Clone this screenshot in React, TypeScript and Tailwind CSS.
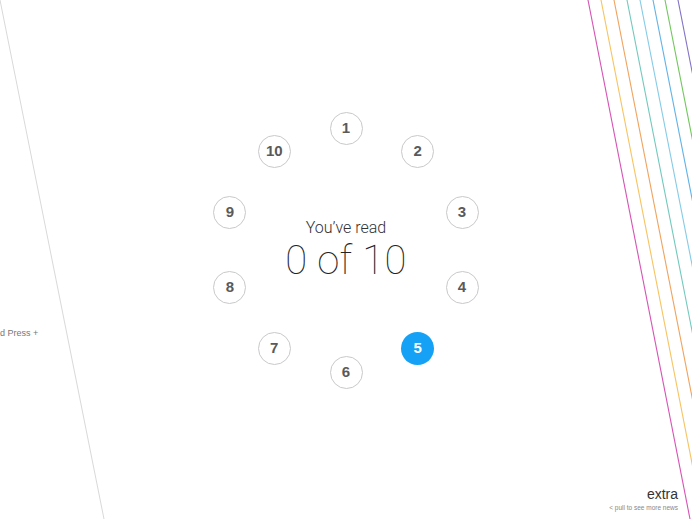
import React from "react";

const LINES = [
  { x: 588, color: "#d654b4" },
  { x: 601, color: "#f6c462" },
  { x: 614, color: "#f0a35e" },
  { x: 627, color: "#72c9bc" },
  { x: 640, color: "#86cbe6" },
  { x: 653, color: "#62b2e6" },
  { x: 665, color: "#72c75e" },
  { x: 678, color: "#8272c6" },
];

const RING = 122;
const CURRENT = 5;

function Stripes() {
  return (
    <svg
      aria-hidden
      className="pointer-events-none absolute inset-0"
      width="692"
      height="519"
      viewBox="0 0 692 519"
    >
      <line x1="0" y1="0" x2="104" y2="519" stroke="#d9d9d9" strokeWidth="1" />
      {LINES.map((l) => (
        <line
          key={l.x}
          x1={l.x}
          y1="0"
          x2={l.x + 102}
          y2="519"
          stroke={l.color}
          strokeWidth="1.1"
        />
      ))}
    </svg>
  );
}

export default function App() {
  const stories = Array.from({ length: 10 }, (_, i) => i + 1);

  return (
    <main
      className="relative h-[519px] w-full overflow-hidden bg-white"
      style={{ fontFamily: '"Liberation Sans", Arial, sans-serif' }}
    >
      <Stripes />

      {/* peek of the previous page */}
      <span className="absolute left-0 top-[327px] text-[9px] text-[#777]">d Press +</span>

      <div className="flex justify-center pt-[112px]">
        <div className="relative h-[276px] w-[276px]">
          <div
            className="flex flex-col items-center pt-[108px]"
            style={{ fontFamily: 'Roboto, "Liberation Sans", sans-serif' }}
          >
            <span className="text-[16px] font-light leading-none text-[#333]">You’ve read</span>
            <span className="mt-[5px] text-[40px] font-thin leading-none tracking-[0.3px] text-[#222]">
              0 of 10
            </span>
          </div>

          {stories.map((n) => {
            const a = ((n - 1) * 36 * Math.PI) / 180;
            const cx = 138 + Math.sin(a) * RING;
            const cy = 138 - Math.cos(a) * RING;
            const active = n === CURRENT;
            return (
              <div
                key={n}
                className={`absolute flex h-[33px] w-[33px] items-center justify-center rounded-full text-[15px] font-bold ${
                  active
                    ? "bg-[#14a1f6] text-white"
                    : "border border-[#c9c9c9] bg-white text-[#5a5a5a]"
                }`}
                style={{ left: cx - 16.5, top: cy - 16.5 }}
              >
                {n}
              </div>
            );
          })}
        </div>
      </div>

      <div className="absolute bottom-[8px] right-[14px] flex flex-col items-end">
        <span className="text-[14px] leading-none text-[#333]">extra</span>
        <span className="mt-[4px] text-[6.5px] leading-none text-[#888]">&lt; pull to see more news</span>
      </div>
    </main>
  );
}
